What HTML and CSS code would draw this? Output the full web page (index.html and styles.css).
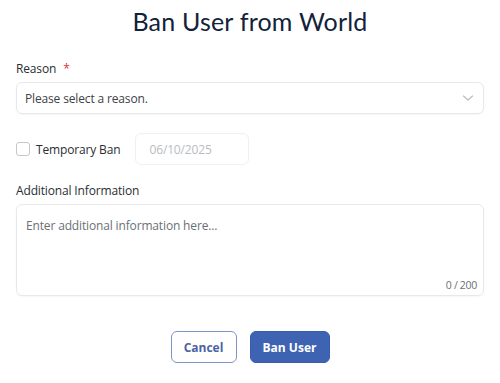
FILE: index.html
```html
<!DOCTYPE html>
<html>
<head>
<meta charset="utf-8">
<link rel="stylesheet" href="styles.css">
</head>
<body>
<div class="dialog">
  <h1 class="title">Ban User from World</h1>
  <div class="field field-reason">
    <label class="label">Reason <span class="req">*</span></label>
    <div class="select">
      <span class="select-text">Please select a reason.</span>
      <svg class="chev" width="12" height="8" viewBox="0 0 12 8"><path d="M1.5 2 L6 6 L10.5 2" fill="none" stroke="#b9bcc2" stroke-width="1.2" stroke-linecap="round" stroke-linejoin="round"/></svg>
    </div>
  </div>
  <div class="temp-row">
    <label class="check-label"><span class="checkbox"></span>Temporary Ban</label>
    <div class="date">06/10/2025</div>
  </div>
  <div class="field field-info">
    <label class="label">Additional Information</label>
    <div class="textarea">
      <span class="placeholder">Enter additional information here...</span>
      <span class="counter">0 / 200</span>
    </div>
  </div>
  <div class="actions">
    <button class="btn btn-outline">Cancel</button>
    <button class="btn btn-primary">Ban User</button>
  </div>
</div>
</body>
</html>
```

FILE: styles.css
```css
* { box-sizing: border-box; }
body {
  margin: 0;
  background: #ffffff;
  font-family: "Open Sans", "Noto Sans", sans-serif;
  color: #2f3437;
}
.dialog {
  padding: 6px 16px 0 16px;
}
.title {
  margin: 0;
  text-align: center;
  font-family: "Lato", sans-serif;
  font-weight: 400;
  font-size: 25px;
  line-height: 30px;
  color: #11223a;
  letter-spacing: 0.2px;
}
.field {
  display: flex;
  flex-direction: column;
}
.label {
  font-size: 12px;
  letter-spacing: -0.15px;
  line-height: 16px;
  color: #2a2e32;
  margin-bottom: 5px;
}
.req { color: #d9363e; margin-left: 4px; }
.field-reason { margin-top: 25px; }
.select {
  height: 32px;
  border: 1px solid #e6e8eb;
  border-radius: 6px;
  display: flex;
  align-items: center;
  justify-content: space-between;
  padding: 0 9px 0 8px;
  box-shadow: 0 1px 2px rgba(0,0,0,0.04);
}
.select-text { font-size: 12px; letter-spacing: -0.15px; color: #3d4247; }
.temp-row {
  display: flex;
  align-items: center;
  margin-top: 19px;
}
.check-label {
  display: flex;
  align-items: center;
  font-size: 12px;
  letter-spacing: -0.15px;
  color: #2a2e32;
}
.checkbox {
  width: 14px;
  height: 14px;
  border: 1px solid #c4c8cd;
  border-radius: 3px;
  margin-right: 6px;
  background: #fff;
}
.date {
  margin-left: 15px;
  width: 114px;
  height: 32px;
  border: 1px solid #eef0f2;
  border-radius: 6px;
  display: flex;
  align-items: center;
  padding-left: 13px;
  font-size: 12px;
  letter-spacing: -0.15px;
  color: #b8bcc1;
}
.field-info { margin-top: 18px; }
.textarea {
  position: relative;
  height: 92px;
  border: 1px solid #e6e8eb;
  border-radius: 6px;
  padding: 8px 9px;
  box-shadow: 0 1px 2px rgba(0,0,0,0.04);
}
.placeholder { font-size: 12px; letter-spacing: -0.15px; color: #6b7075; }
.counter {
  position: absolute;
  right: 6px;
  bottom: 3px;
  font-size: 10.5px;
  letter-spacing: -0.3px;
  color: #6b7075;
}
.actions {
  display: flex;
  justify-content: center;
  gap: 13px;
  margin-top: 35px;
}
.btn {
  height: 32px;
  border-radius: 6px;
  font-family: "Open Sans", sans-serif;
  font-weight: 700;
  font-size: 12px;
  padding: 0;
  cursor: pointer;
}
.btn-outline {
  width: 66px;
  background: #fff;
  border: 1px solid #7f93c6;
  color: #4a64a6;
}
.btn-primary {
  width: 80px;
  background: #3f63b3;
  border: 1px solid #3a5dab;
  color: #ffffff;
}
```
